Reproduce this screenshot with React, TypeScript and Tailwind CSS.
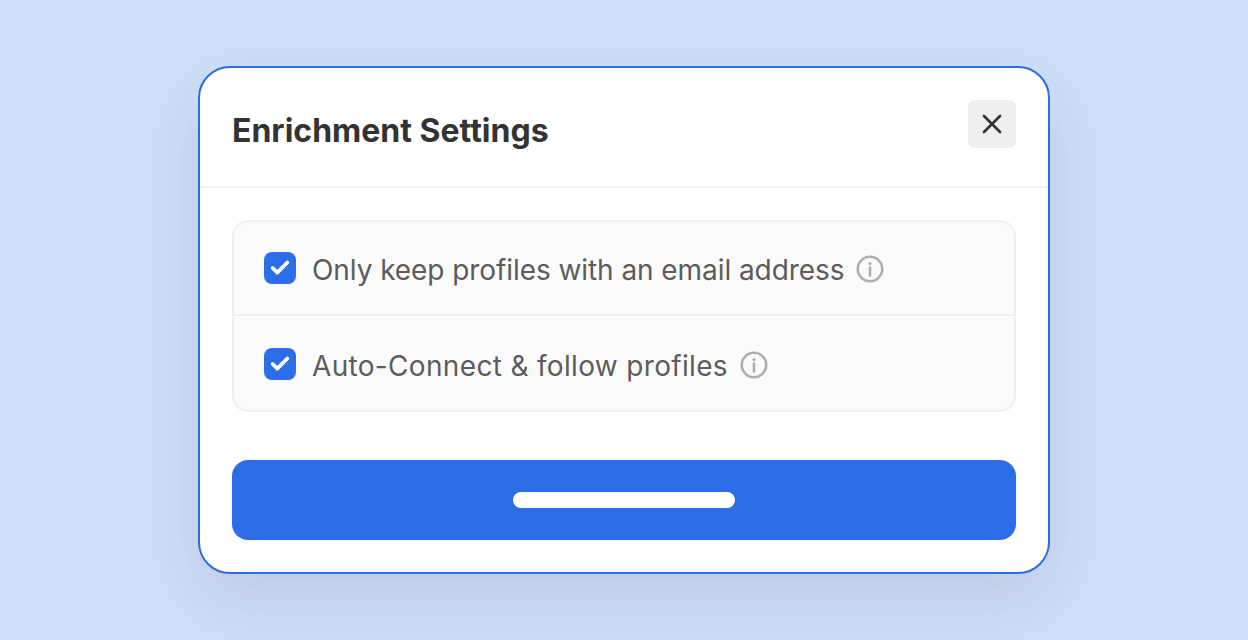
import { Check, X } from "lucide-react";

const options = [
  { label: "Only keep profiles with an email address", spacing: "tracking-[-0.07px]", row: "border-b-2 border-[#f0f0f0]" },
  { label: "Auto-Connect & follow profiles", spacing: "tracking-[0.33px]", row: "pt-[2px]" },
];

function InfoIcon() {
  return (
    <svg viewBox="0 0 28 28" fill="none" className="ml-3 mt-[2px] h-7 w-7 text-[#adadad]">
      <circle cx="14" cy="14" r="12.25" stroke="currentColor" strokeWidth="2.5" />
      <circle cx="14" cy="8.6" r="1.6" fill="currentColor" />
      <path d="M14 12.5v8" stroke="currentColor" strokeWidth="2.6" strokeLinecap="round" />
    </svg>
  );
}

export default function App() {
  return (
    <div className="flex h-[640px] w-full items-center justify-center overflow-hidden bg-[#d0e0f9] font-['Inter',sans-serif]">
      <div className="w-[852px] rounded-[32px] border-2 border-[#2f6ddc] bg-white shadow-[0_24px_72px_rgba(60,60,70,0.14)]">
        <div className="flex h-[120px] items-start justify-between border-b-2 border-[#f0f0f0] px-8 pt-8">
          <h1 className="mt-[9px] text-[32px] leading-[44px] font-bold text-[#333333]">Enrichment Settings</h1>
          <button className="flex h-12 w-12 items-center justify-center rounded-lg bg-[#f0f0f0] text-[#333333]">
            <X className="h-8 w-8" strokeWidth={2} />
          </button>
        </div>
        <div className="p-8">
          <div className="rounded-2xl border-2 border-[#f0f0f0] bg-[#fbfbfb]">
            {options.map((o) => (
              <div key={o.label} className={`flex h-[94px] items-center pl-[30px] ${o.row}`}>
                <span className="flex h-8 w-8 items-center justify-center rounded-lg bg-[#2b6ee8] text-white">
                  <Check className="h-[22px] w-[22px]" strokeWidth={4} />
                </span>
                <span className={`ml-4 mt-[3px] text-[28px] leading-10 text-[#5c5c5c] ${o.spacing}`}>{o.label}</span>
                <InfoIcon />
              </div>
            ))}
          </div>
          <button className="mt-12 flex h-20 w-full items-center justify-center rounded-2xl bg-[#2b6ee8]">
            <span className="h-4 w-[222px] rounded-lg bg-white" />
          </button>
        </div>
      </div>
    </div>
  );
}
